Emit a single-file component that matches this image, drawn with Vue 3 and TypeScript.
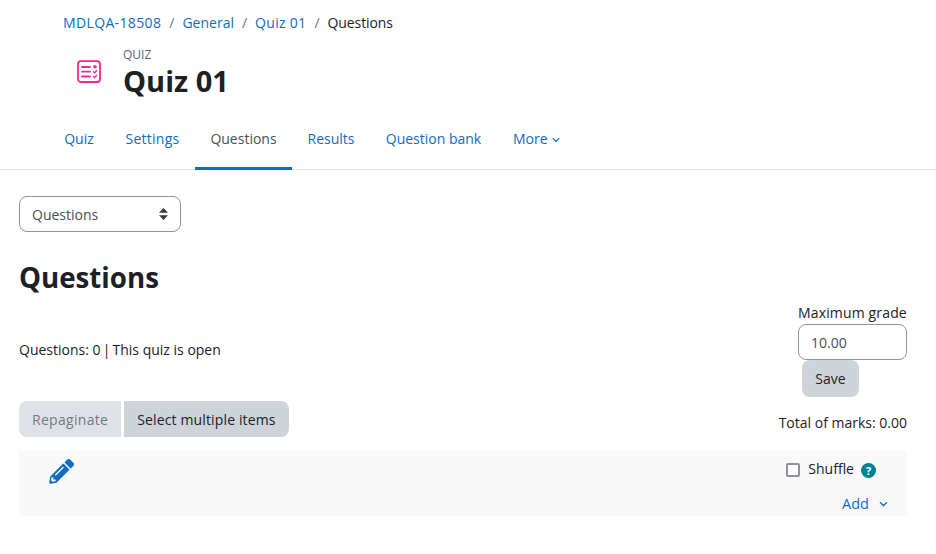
<script setup lang="ts">
const crumbs: string[] = ['MDLQA-18508', 'General', 'Quiz 01']
const tabs: { label: string; active?: boolean }[] = [
  { label: 'Quiz' },
  { label: 'Settings' },
  { label: 'Questions', active: true },
  { label: 'Results' },
  { label: 'Question bank' },
]
</script>

<template>
  <div class="page">
    <header class="head">
      <nav class="crumbs">
        <template v-for="c in crumbs" :key="c">
          <a class="link">{{ c }}</a><span class="sep">/</span>
        </template>
        <span class="current">Questions</span>
      </nav>
      <div class="title">
        <svg class="quiz-icon" width="24" height="24" viewBox="0 0 24 24" fill="none" stroke="#f0288f" stroke-width="1.8" stroke-linecap="round" stroke-linejoin="round">
          <rect x="1" y="1.2" width="22" height="20.8" rx="3" />
          <path d="M5 7h8M5 11.700h8M5 16.500h8" />
          <path d="M17 6h2v1.600h-2zM16.500 11.700l1.200 1.200 2-2.400M16.500 16.500l1.200 1.200 2-2.400" stroke-width="1.3" />
        </svg>
        <div class="title-text">
          <div class="kicker">QUIZ</div>
          <h1>Quiz 01</h1>
        </div>
      </div>
    </header>

    <ul class="tabs">
      <li v-for="t in tabs" :key="t.label" class="tab" :class="{ active: t.active }">{{ t.label }}</li>
      <li class="tab">More
        <svg class="more-chev" width="8" height="6" viewBox="0 0 8 6" fill="none" stroke="#0f6cbf" stroke-width="1.2"><path d="M.8 1.200 4 4.400l3.200-3.200" /></svg>
      </li>
    </ul>

    <main class="content">
      <div class="select">
        <span class="select-label">Questions</span>
        <svg width="9" height="12" viewBox="0 0 9 12" fill="#343a40"><path d="M4.500 0 9 4.700H0zM4.500 12 0 7.300h9z" /></svg>
      </div>

      <h2>Questions</h2>

      <div class="info-row">
        <div class="status">Questions: 0 <span class="bar">|</span> This quiz is open</div>
        <form class="grade" @submit.prevent>
          <label for="grade">Maximum grade</label>
          <input id="grade" class="input" value="10.00" />
          <button class="btn save" type="button">Save</button>
        </form>
      </div>

      <div class="action-row">
        <div class="actions">
          <button class="btn disabled" type="button">Repaginate</button>
          <button class="btn multi" type="button">Select multiple items</button>
        </div>
        <div class="total">Total of marks: 0.00</div>
      </div>

      <section class="panel">
        <svg class="pencil" width="25" height="25" viewBox="0 0 512 512" fill="#0f6cbf">
          <path d="M497.900 142.100 452 188c-4.700 4.700-12.300 4.700-17 0L324 77c-4.700-4.700-4.700-12.300 0-17l45.900-45.900c18.600-18.700 48.900-18.700 67.700 0l60.300 60.300c18.800 18.700 18.800 49 0 67.700zM285.300 98.700 25.500 358.500 4.500 478.900c-2.900 16.200 11.300 30.300 27.500 27.500l120.400-21.100 259.800-259.800c4.700-4.700 4.700-12.300 0-17l-109.900-110c-4.800-4.700-12.400-4.700-17 .2zM124.100 336.300c-5.500-5.500-5.500-14.300 0-19.800l152.400-152.400c5.500-5.500 14.300-5.500 19.800 0s5.500 14.300 0 19.800L143.900 336.300c-5.500 5.500-14.300 5.500-19.800 0zM88.400 419.500h48v36.300l-64.500 11.300-31.100-31.100 11.300-64.500h36.300z" />
        </svg>
        <div class="panel-right">
          <div class="shuffle">
            <span class="check"></span>
            <span class="shuffle-label">Shuffle</span>
            <span class="help">?</span>
          </div>
          <div class="add">
            <span class="add-label">Add</span>
            <svg width="9" height="6" viewBox="0 0 9 6" fill="none" stroke="#0f6cbf" stroke-width="1.300"><path d="M1 1.200 4.500 4.500 8 1.200" /></svg>
          </div>
        </div>
      </section>
    </main>
  </div>
</template>

<style>
html, body { margin: 0; background: #fff; }
</style>

<style scoped>
.page {
  width: 936px;
  height: 554px;
  overflow: hidden;
  font-family: "Open Sans", "Noto Sans", sans-serif;
  font-size: 14px;
  line-height: 20px;
  color: #1d2125;
}
.head { padding: 13px 0 0 63px; }
.crumbs { display: flex; height: 20px; }
.link { color: #0f6cbf; }
.link:first-child { letter-spacing: .36px; }
.link:nth-of-type(3) { letter-spacing: .3px; }
.current { letter-spacing: -.1px; }
.sep { color: #6a737b; margin: 0 8px; }
.title { display: flex; align-items: flex-start; margin-top: 14px; }
.quiz-icon { margin: 13px 0 0 14px; }
.title-text { margin-left: 22px; }
.kicker { font-size: 12px; line-height: 16px; color: #5d6770; }
h1 { margin: 0; font-size: 29px; line-height: 36px; font-weight: 700; color: #1d2125; }
.tabs {
  display: flex;
  list-style: none;
  margin: 15px 0 0;
  padding: 0 0 0 48px;
  height: 55px;
  border-bottom: 1px solid #dee2e6;
}
.tab {
  padding-top: 15px;
  color: #0f6cbf;
  white-space: nowrap;
  text-align: center;
  margin-bottom: -1px;
  box-sizing: border-box;
}
.tab:nth-child(1) { width: 62px; }
.tab:nth-child(2) { width: 85px; letter-spacing: .25px; }
.tab:nth-child(3) { width: 97px; }
.tab:nth-child(4) { width: 78px; }
.tab:nth-child(5) { width: 127px; }
.tab:nth-child(6) { width: 80px; text-align: left; padding-left: 16px; }
.tab.active { color: #495057; border-bottom: 3px solid #0f6cbf; }
.more-chev { margin-left: 1px; vertical-align: 1px; }
.content { padding: 26px 29px 0 19px; }
.select {
  box-sizing: border-box;
  width: 162px;
  height: 36px;
  border: 1px solid #8f959e;
  border-radius: 8px;
  display: flex;
  align-items: center;
  justify-content: space-between;
  padding: 0 12px;
  color: #495057;
}
.select-label { position: relative; top: 1px; }
h2 { margin: 27px 0 0; font-size: 27.700px; line-height: 36px; font-weight: 700; color: #1d2125; }
.info-row { display: flex; justify-content: space-between; align-items: flex-start; margin-top: 8px; }
.status { margin-top: 37px; }
.bar { color: #1d2125; margin: 0 -1.500px; }
.grade { display: flex; flex-direction: column; align-items: flex-start; width: 109px; }
.grade label { height: 20px; line-height: 20px; white-space: nowrap; margin-bottom: 1px; letter-spacing: .15px; }
.input {
  box-sizing: border-box;
  width: 109px;
  height: 36px;
  border: 1px solid #8f959e;
  border-radius: 8px;
  padding: 0 12px;
  font: inherit;
  color: #495057;
  outline: none;
}
.btn {
  box-sizing: border-box;
  height: 36px;
  border: 0;
  border-radius: 8px;
  padding: 2px 13px 0;
  background: #ced4da;
  color: #1d2125;
  font: inherit;
}
.save { margin: 0 0 0 4px; height: 37px; width: 57px; padding: 0; }
.action-row { display: flex; justify-content: space-between; align-items: center; margin-top: 4px; }
.actions { display: flex; gap: 3px; }
.actions .btn:first-child { border-radius: 8px 0 0 8px; }
.actions .btn:last-child { border-radius: 0 8px 8px 0; }
.disabled { background: #dee2e6; color: #6f7a83; letter-spacing: .3px; }
.multi { letter-spacing: .14px; }
.total { margin-top: 8px; }
.panel {
  display: flex;
  justify-content: space-between;
  height: 65px;
  margin-top: 14px;
  background: #f9f9f9;
}
.pencil { margin: 8px 0 0 30px; }
.panel-right { display: flex; flex-direction: column; align-items: flex-end; padding-right: 19px; }
.shuffle { display: flex; align-items: center; margin: 8px 12px 0 0; height: 20px; }
.check {
  box-sizing: border-box;
  width: 14px;
  height: 14px;
  border: 2px solid #8f8f9d;
  border-radius: 2px;
  background: #fff;
  margin: 2px 8px 0 0;
}
.help {
  box-sizing: border-box;
  width: 15px;
  height: 15px;
  margin: 2px 0 0 7px;
  border-radius: 50%;
  background: #008196;
  color: #fff;
  font-size: 11px;
  font-weight: 700;
  line-height: 15px;
  text-align: center;
}
.add { display: flex; align-items: center; gap: 10px; margin-top: 15px; color: #0f6cbf; font-size: 14.500px; }
</style>
